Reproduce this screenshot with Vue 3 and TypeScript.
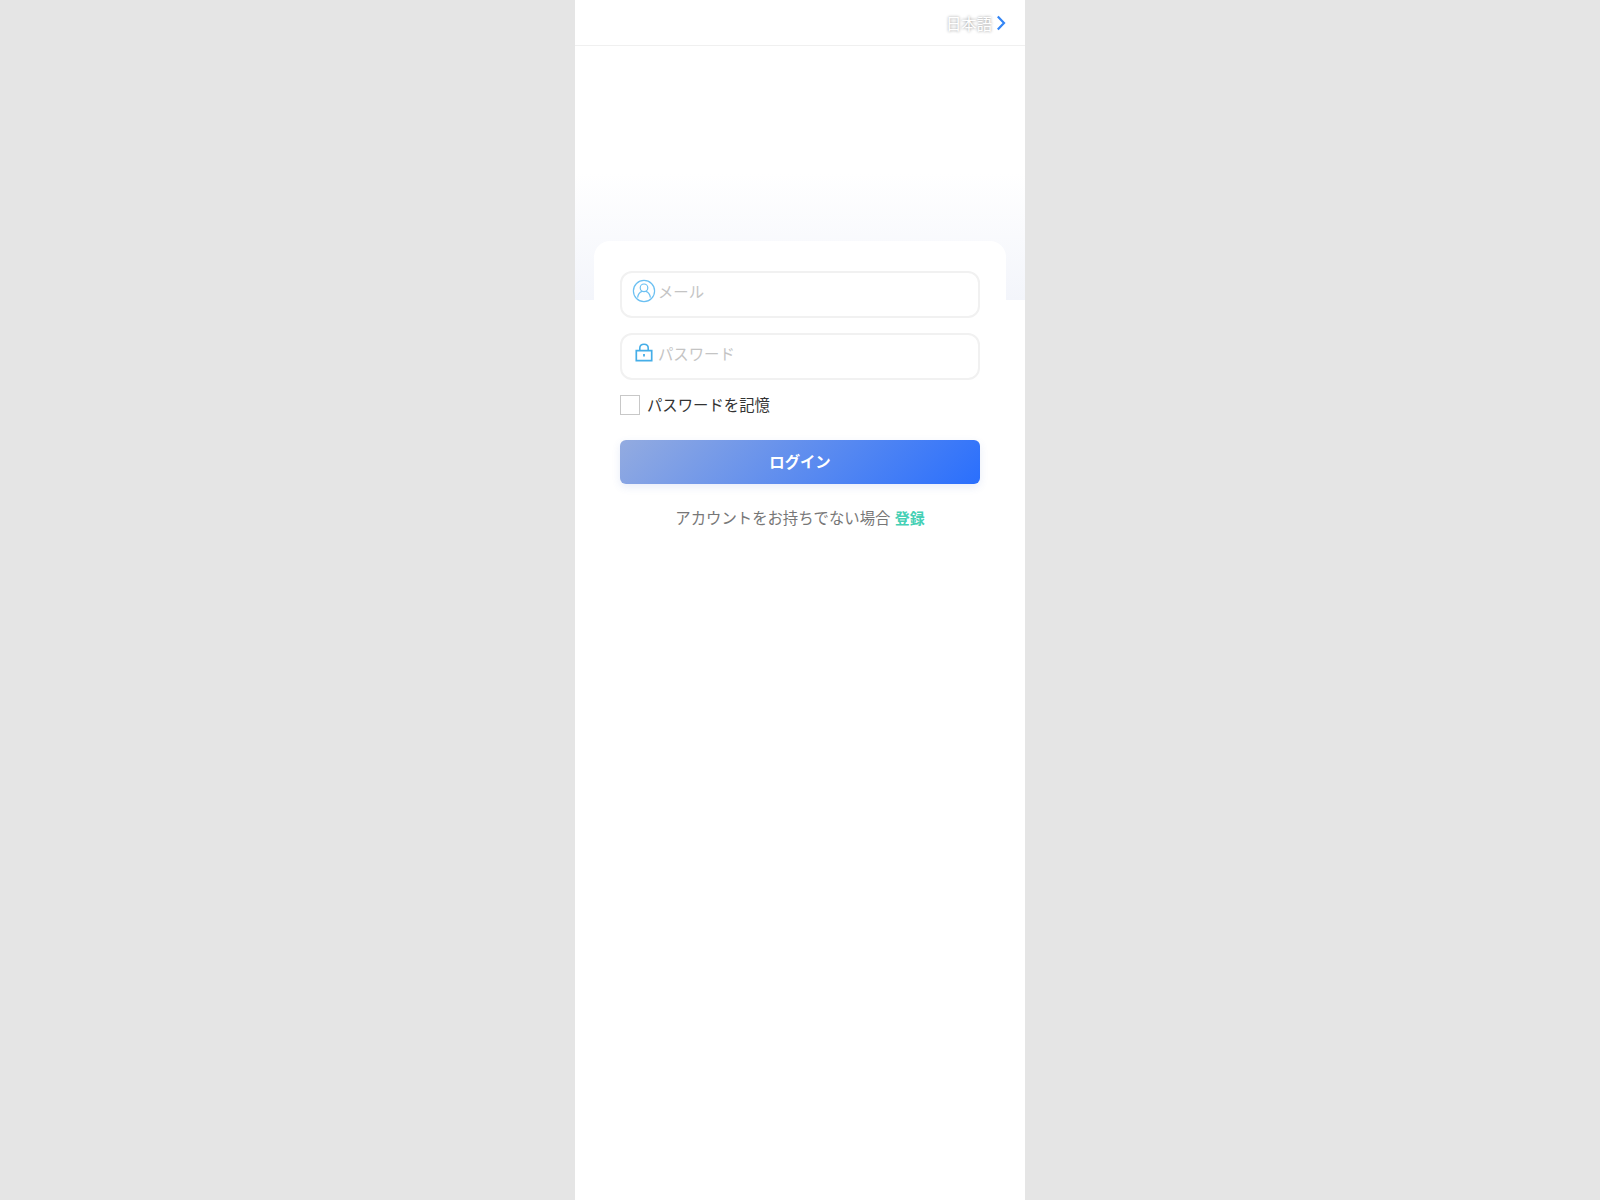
<template>
  <div class="page">
    <div class="phone">
      <header class="top-bar">
        <span class="lang">日本語</span>
        <svg class="chevron" width="10" height="16" viewBox="0 0 10 16">
          <path d="M1.8 1.5 L8 8 L1.8 14.5" fill="none" stroke="#3385f5" stroke-width="2.2" />
        </svg>
      </header>

      <main class="main">
        <form class="card" @submit.prevent>
          <label class="field">
            <svg class="field-icon" width="24" height="24" viewBox="0 0 24 24" fill="none" stroke="#6cc0f2" stroke-width="1.2">
              <circle cx="12" cy="12" r="10.6" />
              <circle cx="12" cy="8.8" r="3.8" />
              <path d="M5.6 18.6 C6 15.6 7.8 13.2 10 12.4 M18.4 18.6 C18 15.6 16.2 13.2 14 12.4" />
            </svg>
            <input class="field-input" type="text" placeholder="メール" />
          </label>

          <label class="field">
            <svg class="field-icon" width="24" height="24" viewBox="0 0 24 24" fill="none" stroke="#45aee8" stroke-width="1.6">
              <path d="M4.3 9.6 H19.7 V19.7 H4.3 Z" stroke-width="1.7" />
              <path d="M7.8 9.4 V7 C7.8 4.4 9.5 3.3 12 3.3 C14.5 3.3 16.2 4.4 16.2 7 V9.4" />
              <path d="M12 13 V15.5" stroke-width="1.8" />
            </svg>
            <input class="field-input" type="password" placeholder="パスワード" />
          </label>

          <label class="remember">
            <input class="remember-box" type="checkbox" />
            <span class="remember-text">パスワードを記憶</span>
          </label>

          <button class="login" type="submit"><span class="login-text">ログイン</span></button>

          <p class="signup">
            アカウントをお持ちでない場合 <a class="signup-link" href="#">登録</a>
          </p>
        </form>
      </main>
    </div>
  </div>
</template>

<script setup lang="ts">
</script>

<style>
body {
  background: #e5e5e5;
}
</style>

<style scoped>
.page {
  display: flex;
  justify-content: center;
  min-height: 1200px;
  background: #e5e5e5;
  font-family: "Liberation Sans", "Noto Sans CJK JP", sans-serif;
  font-size: 15.36px;
}

.phone {
  width: 450px;
  background: #fff;
}

.top-bar {
  display: flex;
  align-items: center;
  justify-content: flex-end;
  gap: 4px;
  height: 45px;
  padding-right: 19px;
  border-bottom: 1px solid #f0f0f0;
}

.lang {
  color: #fff;
  text-shadow: 0 0 3px rgba(0, 0, 0, 0.45);
}

.chevron {
  display: block;
}

.main {
  padding: 195px 19px 0;
  background: linear-gradient(180deg, #fff 50%, #f3f5fb 100%) top / 100% 254px no-repeat;
}

.card {
  padding: 30px 26px 0;
  border-radius: 16px;
  background: #fff;
}

.field {
  display: flex;
  align-items: flex-start;
  height: 47px;
  margin-bottom: 15px;
  padding: 6px 9.5px 0;
  box-sizing: border-box;
  border: 2px solid #f1f1f1;
  border-radius: 12px;
}

.field-icon {
  flex: none;
  display: block;
}

.field-input {
  flex: 1;
  min-width: 0;
  height: 24px;
  margin-top: 2px;
  padding: 0 0 0 2.5px;
  border: 0;
  outline: 0;
  font: inherit;
  background: transparent;
}

.field-input::placeholder {
  color: #c4c4c4;
}

.remember {
  display: flex;
  align-items: center;
  gap: 7px;
  height: 20px;
  color: #333;
}

.remember-text {
  margin-top: -2px;
}

.remember-box {
  appearance: none;
  width: 20px;
  height: 20px;
  margin: 0;
  box-sizing: border-box;
  border: 1px solid #c8c8c8;
  background: #fff;
}

.login {
  display: block;
  width: 100%;
  height: 44px;
  margin-top: 25px;
  padding: 0 0 2px;
  border: 0;
  border-radius: 6px;
  background: linear-gradient(135deg, #93abe0 0%, #2a6ffd 100%);
  box-shadow: 0 3px 8px rgba(60, 100, 200, 0.12);
  color: #fff;
  font: inherit;
  font-weight: 700;
}

.signup {
  margin: 23px 0 0;
  text-align: center;
  line-height: 24px;
  color: #777;
}

.signup-link {
  color: #45d0b5;
  font-size: 15px;
  font-weight: 700;
  text-decoration: none;
}
</style>
